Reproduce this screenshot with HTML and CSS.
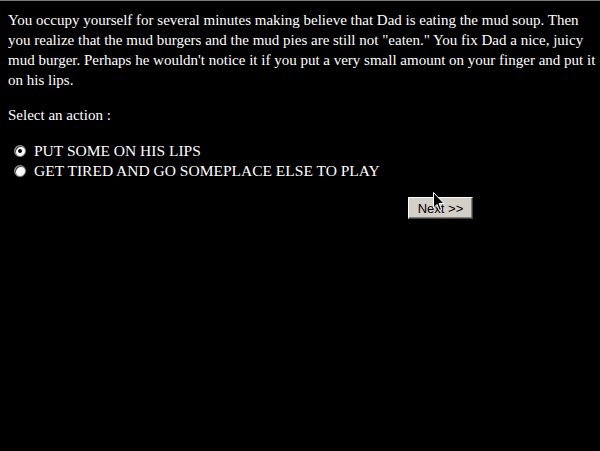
FILE: index.html
```html
<!DOCTYPE html>
<html>
<head>
<meta charset="utf-8">
<link rel="stylesheet" href="styles.css">
</head>
<body>
<div class="topline"></div>
<div class="page">
  <p class="story">You occupy yourself for several minutes making believe that Dad is eating the mud soup. Then you realize that the mud burgers and the mud pies are still not "eaten." You fix Dad a nice, juicy mud burger. Perhaps he wouldn't notice it if you put a very small amount on your finger and put it on his lips.</p>
  <p class="prompt">Select an action :</p>
  <ul class="choices">
    <li class="choice"><span class="radio checked"></span>PUT SOME ON HIS LIPS</li>
    <li class="choice"><span class="radio"></span>GET TIRED AND GO SOMEPLACE ELSE TO PLAY</li>
  </ul>
  <div class="actions">
    <button class="next">Next &gt;&gt;</button>
    <svg class="cursor" width="12" height="20" viewBox="0 0 12 20"><path d="M0.5 0.5 L0.5 16 L4 12.5 L6.5 18.5 L8.5 17.5 L6 11.5 L11 11.5 Z" fill="#000" stroke="#fff" stroke-width="1"/></svg>
  </div>
</div>
</body>
</html>
```
FILE: styles.css
```css
html, body {
  margin: 0;
  padding: 0;
  background: #000;
}
body {
  width: 600px;
  height: 451px;
  overflow: hidden;
  color: #fff;
  font-family: "Liberation Serif", "Times New Roman", serif;
  font-size: 15px;
}
.topline {
  height: 1px;
  background: #7a7a7a;
}
.page {
  padding: 9px 8px 0 8px;
}
.story {
  margin: 0;
  width: 590px;
  line-height: 20px;
}
.prompt {
  margin: 15px 0 0 0;
  line-height: 20px;
}
.choices {
  list-style: none;
  margin: 16px 0 0 0;
  padding: 0;
}
.choice {
  display: flex;
  align-items: center;
  line-height: 20px;
  font-size: 15.5px;
}
.radio {
  width: 10px;
  height: 10px;
  border-radius: 50%;
  background: #fff;
  border: 1px solid #808080;
  box-shadow: inset 1px 1px 0 #404040;
  margin: 0 8px 0 6px;
  position: relative;
  flex: none;
}
.radio.checked::after {
  content: "";
  position: absolute;
  left: 3px;
  top: 3px;
  width: 4px;
  height: 4px;
  border-radius: 50%;
  background: #000;
}
.actions {
  margin: 16px 0 0 400px;
  position: relative;
}
.next {
  width: 65px;
  height: 22px;
  background: #d4d0c8;
  color: #000;
  font-family: "Liberation Sans", Arial, sans-serif;
  font-size: 13px;
  border: 1px solid;
  border-color: #fff #404040 #404040 #fff;
  box-shadow: inset -1px -1px 0 #808080;
  padding: 0;
  border-radius: 0;
}
.cursor {
  position: absolute;
  left: 25px;
  top: -5px;
}
```
